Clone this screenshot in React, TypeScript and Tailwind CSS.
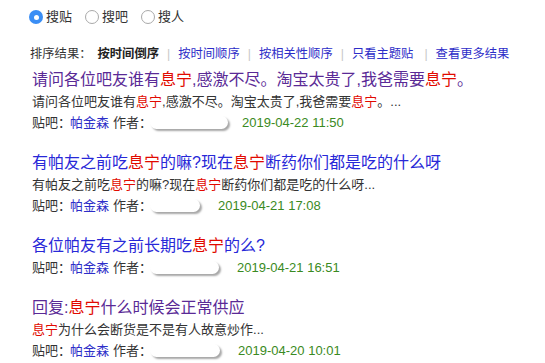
import React from "react";

type Seg = { t: string; hl?: boolean };

type Post = {
  title: Seg[];
  visited?: boolean;
  body?: Seg[];
  date: string;
  blobW: number;
  gap: number;
};

const hl = (t: string): Seg => ({ t, hl: true });
const tx = (t: string): Seg => ({ t });

const posts: Post[] = [
  {
    title: [tx("请问各位吧友谁有"), hl("息宁"), tx(",感激不尽。淘宝太贵了,我爸需要"), hl("息宁"), tx("。")],
    visited: true,
    body: [tx("请问各位吧友谁有"), hl("息宁"), tx(",感激不尽。淘宝太贵了,我爸需要"), hl("息宁"), tx("。...")],
    date: "2019-04-22 11:50",
    blobW: 78,
    gap: 14,
  },
  {
    title: [tx("有帕友之前吃"), hl("息宁"), tx("的嘛?现在"), hl("息宁"), tx("断药你们都是吃的什么呀")],
    body: [tx("有帕友之前吃"), hl("息宁"), tx("的嘛?现在"), hl("息宁"), tx("断药你们都是吃的什么呀...")],
    date: "2019-04-21 17:08",
    blobW: 50,
    gap: 18,
  },
  {
    title: [tx("各位帕友有之前长期吃"), hl("息宁"), tx("的么?")],
    date: "2019-04-21 16:51",
    blobW: 69,
    gap: 18,
  },
  {
    title: [tx("回复:"), hl("息宁"), tx("什么时候会正常供应")],
    visited: true,
    body: [hl("息宁"), tx("为什么会断货是不是有人故意炒作...")],
    date: "2019-04-20 10:01",
    blobW: 70,
    gap: 18,
  },
];

function Segs({ segs }: { segs: Seg[] }) {
  return (
    <>
      {segs.map((s, i) =>
        s.hl ? (
          <span key={i} className="text-[#e10900]">
            {s.t}
          </span>
        ) : (
          <span key={i}>{s.t}</span>
        ),
      )}
    </>
  );
}

function Radio({ label, checked }: { label: string; checked?: boolean }) {
  return (
    <label className="flex items-center gap-[3px]">
      {checked ? (
        <span className="flex h-[14px] w-[14px] items-center justify-center rounded-full bg-[#3a8ef5]">
          <span className="h-[5px] w-[5px] rounded-full bg-white" />
        </span>
      ) : (
        <span className="h-[14px] w-[14px] rounded-full border border-[#a9a9a9] bg-white" />
      )}
      <span>{label}</span>
    </label>
  );
}

function Sep() {
  return <span className="px-[8px] text-[#c8c8c8]">|</span>;
}

export default function App() {
  return (
    <div
      className="h-[363px] w-[545px] overflow-hidden bg-white text-[#333]"
      style={{ fontFamily: '"Liberation Sans", "Noto Sans CJK SC", sans-serif' }}
    >
      <div className="flex gap-[13px] pl-[29px] pt-[9px] text-[13px] leading-[16px]">
        <Radio label="搜贴" checked />
        <Radio label="搜吧" />
        <Radio label="搜人" />
      </div>

      <div className="mt-[21px] flex pl-[30px] text-[12.3px] leading-[16px]">
        <span>排序结果：</span>
        <span className="ml-[6px] font-bold text-[#222]">按时间倒序</span>
        <Sep />
        <span className="text-[#2d2dc8]">按时间顺序</span>
        <Sep />
        <span className="text-[#2d2dc8]">按相关性顺序</span>
        <Sep />
        <span className="text-[#2d2dc8]">只看主题贴</span>
        <span className="pl-[11px] pr-[8px] text-[#c8c8c8]">|</span>
        <span className="text-[#2d2dc8]">查看更多结果</span>
      </div>

      <div className="mt-[7px] flex flex-col pl-[32px]">
        {posts.map((p, i) => (
          <div key={i} className="mb-[19px] flex flex-col">
            <div className={`text-[16px] leading-[22px] ${p.visited ? "text-[#5a2a96]" : "text-[#2828d8]"}`}>
              <Segs segs={p.title} />
            </div>
            {p.body ? (
              <div className="text-[13px] leading-[21px] text-[#333]">
                <Segs segs={p.body} />
              </div>
            ) : null}
            <div className="flex items-center text-[13px] leading-[21px] text-[#333]">
              <span>贴吧：</span>
              <span className="ml-[-1px] text-[#2d2dc8]">帕金森</span>
              <span className="ml-[4px]">作者：</span>
              <span
                className="ml-[-2px] h-[13px] rounded-full bg-white shadow-[2px_2px_2px_rgba(0,0,0,0.35)]"
                style={{ width: p.blobW }}
              />
              <span className="text-[#3a8a22]" style={{ marginLeft: p.gap }}>
                {p.date}
              </span>
            </div>
          </div>
        ))}
      </div>
    </div>
  );
}
